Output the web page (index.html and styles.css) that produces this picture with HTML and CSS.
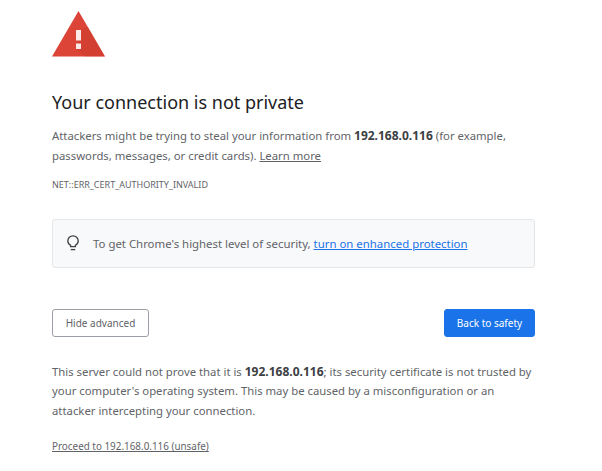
FILE: index.html
```html
<!DOCTYPE html>
<html lang="en">
<head>
    <meta charset="UTF-8">
    <meta name="viewport" content="width=device-width, initial-scale=1.0">
    <title>Privacy error</title>
    <link rel="stylesheet" href="styles.css">
</head>
<body>
    <div class="interstitial">
        <svg class="warning-icon" width="54" height="46" viewBox="0 0 54 46">
            <polygon points="26.5,0 53,45.5 0,45.5" fill="#db4437"/>
            <polygon points="29,19 24,38 33,45.5 53,45.5 36,16" fill="#c53929" fill-opacity="0.35"/>
            <rect x="24" y="19" width="5" height="10.5" fill="#fbeae8"/>
            <rect x="24" y="32.5" width="5" height="5.5" fill="#fbeae8"/>
        </svg>
        <h1>Your connection is not private</h1>
        <p class="message">Attackers might be trying to steal your information from <strong>192.168.0.116</strong> (for example, passwords, messages, or credit cards). <a href="#" class="plain-link">Learn more</a></p>
        <div class="error-code">NET::ERR_CERT_AUTHORITY_INVALID</div>
        <div class="enhanced-box">
            <svg class="bulb-icon" width="14" height="17" viewBox="0 0 14 17" fill="none" stroke="#3c4043" stroke-width="1.3">
                <path d="M4.6 11.6V10.3C2.9 9.4 1.8 7.8 1.8 6a5.2 5.2 0 0 1 10.4 0c0 1.8-1.1 3.4-2.8 4.3v1.3z"/>
                <path d="M4.8 14.6h4.4"/>
            </svg>
            <span>To get Chrome's highest level of security, <a href="#" class="blue-link">turn on enhanced protection</a></span>
        </div>
        <div class="buttons">
            <button class="secondary">Hide advanced</button>
            <button class="primary">Back to safety</button>
        </div>
        <p class="details">This server could not prove that it is <strong>192.168.0.116</strong>; its security certificate is not trusted by your computer's operating system. This may be caused by a misconfiguration or an attacker intercepting your connection.</p>
        <a href="#" class="proceed">Proceed to 192.168.0.116 (unsafe)</a>
    </div>
</body>
</html>
```

FILE: styles.css
```css
body {
    margin: 0;
    background-color: #fff;
    color: #5f6368;
    font-family: "Noto Sans", Arial, sans-serif;
    font-size: 11.33px;
}
.interstitial {
    width: 483px;
    padding: 11px 0 0 52px;
}
.warning-icon {
    display: block;
}
h1 {
    margin: 32px 0 0;
    color: #202124;
    font-size: 18px;
    font-weight: 400;
    line-height: 27px;
}
.message {
    margin: 10px 0 0;
    line-height: 19.5px;
}
.message strong, .details strong {
    color: #3c4043;
    font-size: 12px;
    line-height: 1;
}
.plain-link, .proceed {
    color: #5f6368;
}
.error-code {
    margin-top: 13px;
    font-size: 9px;
    line-height: 14px;
}
.enhanced-box {
    display: flex;
    align-items: center;
    gap: 13px;
    height: 47px;
    margin-top: 27px;
    padding-left: 13px;
    background-color: #f8f9fa;
    border: 1px solid #e4e6e8;
    border-radius: 3px;
}
.enhanced-box span {
    font-size: 11.4px;
}
.blue-link {
    color: #1a73e8;
}
.buttons {
    display: flex;
    justify-content: space-between;
    margin-top: 41px;
}
button {
    height: 28px;
    border-radius: 3px;
    font-family: inherit;
    font-size: 10px;
}
.secondary {
    width: 97px;
    background-color: #fff;
    border: 1px solid #9aa0a6;
    color: #5f6368;
}
.primary {
    width: 91px;
    background-color: #1a73e8;
    border: 1px solid #1a73e8;
    color: #fff;
}
.details {
    margin: 25px 0 0;
    line-height: 19.4px;
}
.proceed {
    display: inline-block;
    margin-top: 19px;
    font-size: 9.9px;
}
```
